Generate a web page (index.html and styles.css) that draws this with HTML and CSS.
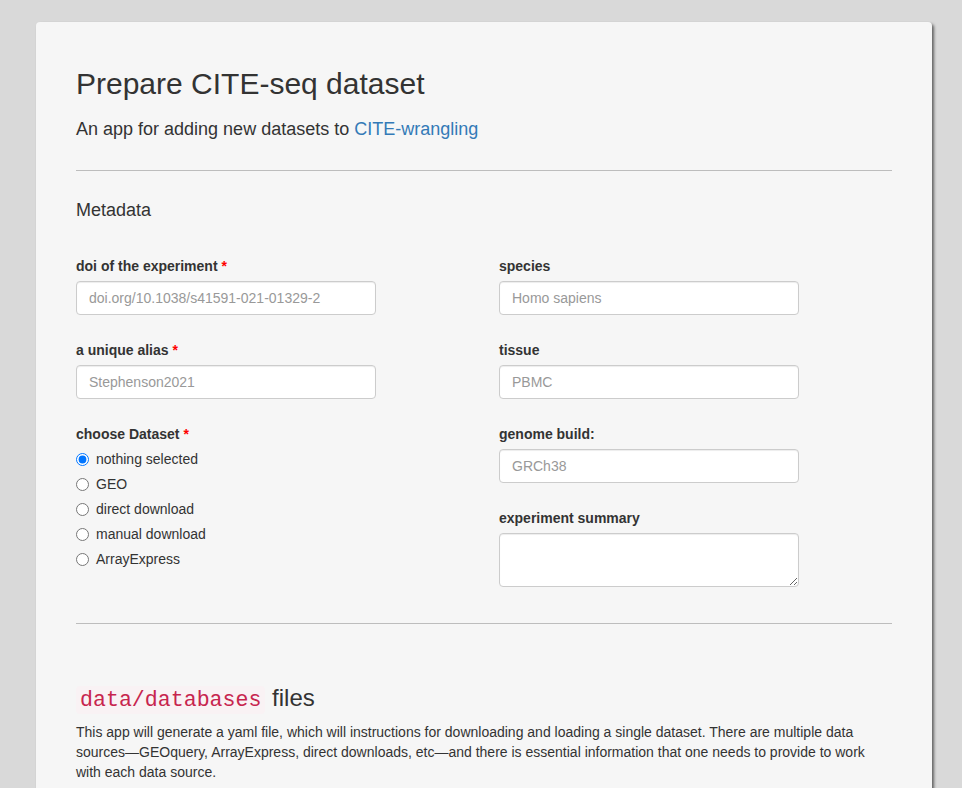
FILE: index.html
```html
<!DOCTYPE html>
<html lang="en">
<head>
<meta charset="utf-8">
<title>Prepare CITE-seq dataset</title>
<link rel="stylesheet" href="styles.css">
</head>
<body>
<div class="card">
  <h2 class="title">Prepare CITE-seq dataset</h2>
  <p class="subtitle">An app for adding new datasets to <a href="#">CITE-wrangling</a></p>
  <hr class="rule rule-top">
  <h4 class="section">Metadata</h4>
  <div class="form-row">
    <div class="col">
      <div class="group">
        <label class="lbl">doi of the experiment <span class="req">*</span></label>
        <input class="ctl" type="text" placeholder="doi.org/10.1038/s41591-021-01329-2">
      </div>
      <div class="group">
        <label class="lbl">a unique alias <span class="req">*</span></label>
        <input class="ctl" type="text" placeholder="Stephenson2021">
      </div>
      <div class="group">
        <label class="lbl">choose Dataset <span class="req">*</span></label>
        <div class="options">
          <label class="radio"><input type="radio" name="ds" checked><span>nothing selected</span></label>
          <label class="radio"><input type="radio" name="ds"><span>GEO</span></label>
          <label class="radio"><input type="radio" name="ds"><span>direct download</span></label>
          <label class="radio"><input type="radio" name="ds"><span>manual download</span></label>
          <label class="radio"><input type="radio" name="ds"><span>ArrayExpress</span></label>
        </div>
      </div>
    </div>
    <div class="col">
      <div class="group">
        <label class="lbl">species</label>
        <input class="ctl" type="text" placeholder="Homo sapiens">
      </div>
      <div class="group">
        <label class="lbl">tissue</label>
        <input class="ctl" type="text" placeholder="PBMC">
      </div>
      <div class="group">
        <label class="lbl">genome build:</label>
        <input class="ctl" type="text" placeholder="GRCh38">
      </div>
      <div class="group">
        <label class="lbl">experiment summary</label>
        <textarea class="ctl area"></textarea>
      </div>
    </div>
  </div>
  <hr class="rule rule-mid">
  <h3 class="files-head"><code class="code">data/databases</code> files</h3>
  <p class="body-text">This app will generate a yaml file, which will instructions for downloading and loading a single dataset. There are multiple data sources—GEOquery, ArrayExpress, direct downloads, etc—and there is essential information that one needs to provide to work with each data source.</p>
</div>
</body>
</html>
```
FILE: styles.css
```css
html, body {
  margin: 0;
  padding: 0;
}
body {
  background: #d9d9d9;
  font-family: "Liberation Sans", Arial, sans-serif;
  font-size: 14px;
  line-height: 20px;
  color: #333;
}
.card {
  margin: 22px 0 0 36px;
  width: 896px;
  box-sizing: border-box;
  padding: 45px 40px 80px;
  background: #f6f6f6;
  border-radius: 4px;
  box-shadow: 2px 2px 3px rgba(0, 0, 0, 0.55);
}
.title {
  margin: 0;
  font-size: 30px;
  line-height: 33px;
  font-weight: 500;
  color: #333;
}
.subtitle {
  margin: 19px 0 0;
  font-size: 18px;
  line-height: 20px;
}
.subtitle a {
  color: #337ab7;
  text-decoration: none;
}
.rule {
  border: 0;
  height: 0;
  border-top: 1px solid #bdbdbd;
  margin: 0;
}
.rule-top {
  margin-top: 31px;
}
.section {
  margin: 29px 0 0;
  font-size: 18px;
  line-height: 20px;
  font-weight: 500;
}
.form-row {
  margin-top: 36px;
  display: grid;
  grid-template-columns: 1fr 1fr;
  column-gap: 30px;
}
.col {
  display: flex;
  flex-direction: column;
  gap: 25px;
}
.group {
  display: flex;
  flex-direction: column;
  align-items: flex-start;
}
.lbl {
  display: block;
  font-weight: bold;
  line-height: 20px;
  margin-bottom: 5px;
}
.req {
  color: red;
}
.ctl {
  display: block;
  box-sizing: border-box;
  width: 300px;
  height: 34px;
  margin: 0;
  padding: 6px 12px;
  font-family: "Liberation Sans", Arial, sans-serif;
  font-size: 14px;
  line-height: 20px;
  color: #555;
  background: #fff;
  border: 1px solid #ccc;
  border-radius: 4px;
  box-shadow: inset 0 1px 1px rgba(0, 0, 0, 0.075);
}
.ctl::placeholder {
  color: #999;
  opacity: 1;
}
.area {
  height: 54px;
  resize: both;
}
.options {
  display: flex;
  flex-direction: column;
  gap: 5px;
}
.radio {
  display: flex;
  align-items: flex-start;
  line-height: 20px;
  font-weight: normal;
}
.radio input {
  width: 13px;
  height: 13px;
  margin: 4px 7px 0 0;
}
.rule-mid {
  margin-top: 36px;
}
.files-head {
  margin: 61px 0 0;
  font-size: 24px;
  line-height: 26.4px;
  font-weight: 500;
}
.code {
  font-family: "Liberation Mono", "Courier New", monospace;
  font-size: 90%;
  padding: 2px 4px;
  color: #c7254e;
  background: #f9f2f4;
  border-radius: 4px;
}
.body-text {
  margin: 9px 0 0;
}
```
